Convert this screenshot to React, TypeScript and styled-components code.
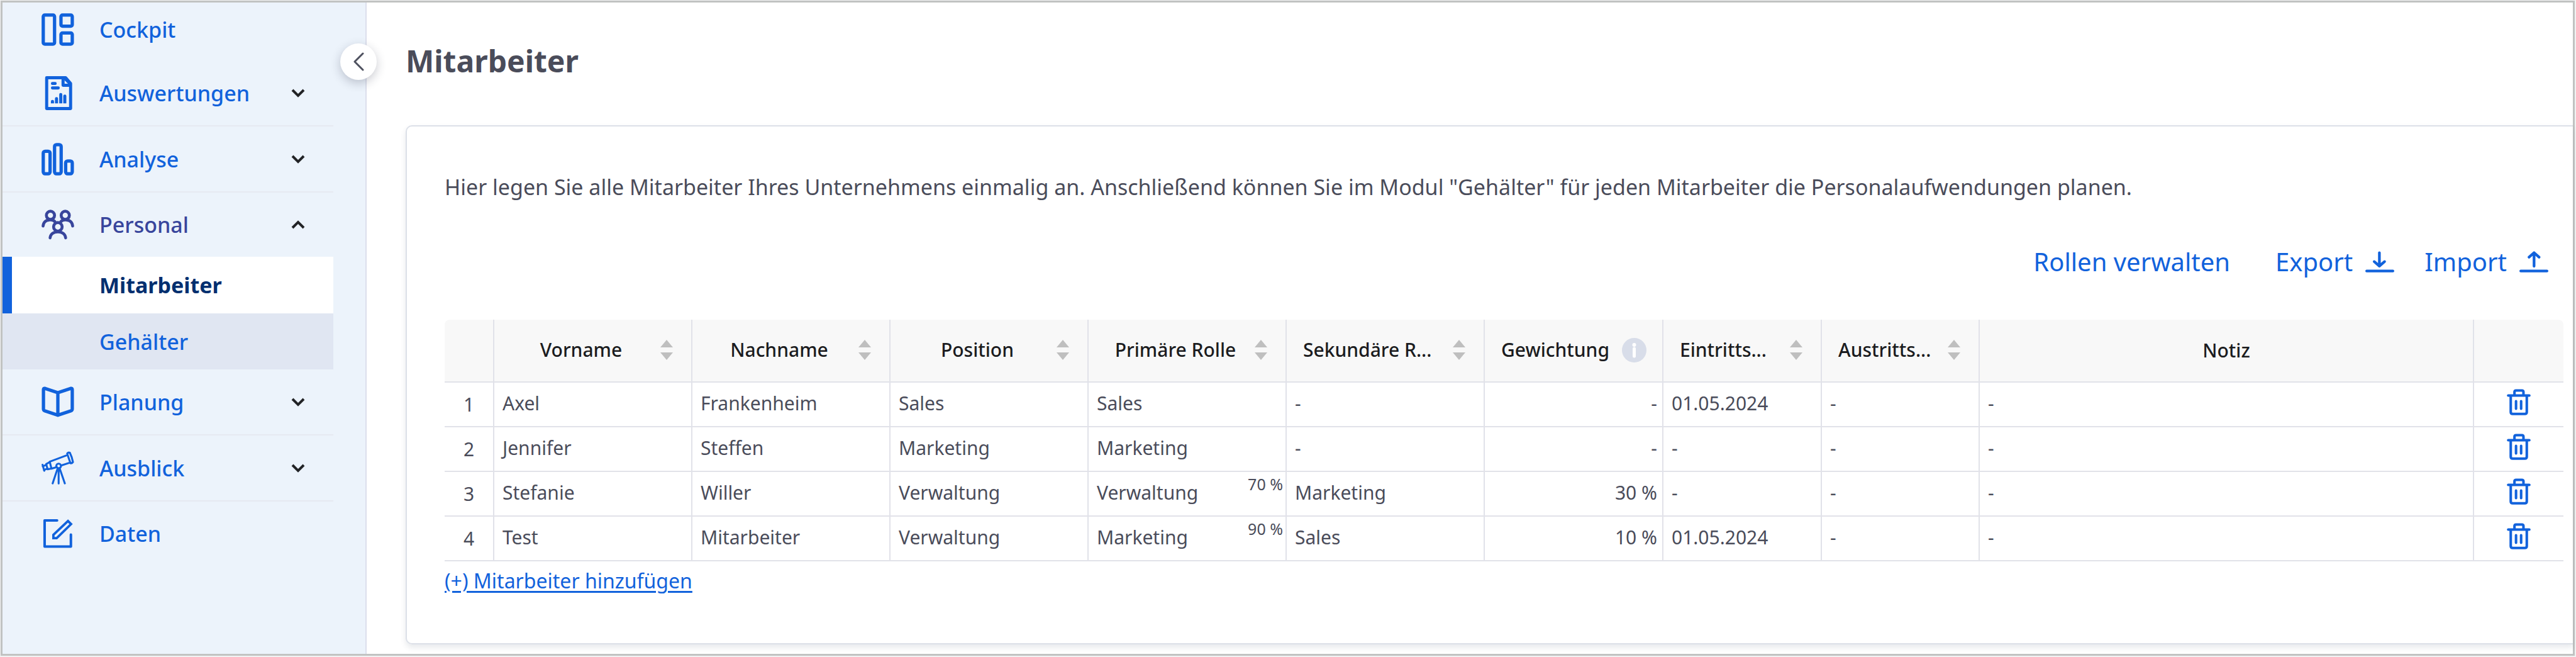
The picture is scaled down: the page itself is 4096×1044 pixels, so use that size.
import React from 'react';
import styled, { createGlobalStyle, css } from 'styled-components';

const color = {
  frame: '#c1c3c2',
  side: '#ecf3fb',
  sideLine: '#e6e9f1',
  sideEdge: '#dcdfec',
  blue: '#1162dc',
  navy: '#012f6f',
  indigo: '#38459c',
  text: '#4a4c5a',
  heading: '#1b1c20',
  line: '#e1e2e9',
  cardLine: '#dce0e8',
};

const GlobalStyle = createGlobalStyle`
  *, *::before, *::after { box-sizing: border-box; }
  body {
    margin: 0;
    padding: 1px 2px 2px 1px;
    background: #f1f2f2;
    color: ${color.text};
    font-family: "Noto Sans", "Open Sans", sans-serif;
  }
  svg { display: block; flex: none; }
  button { border: 0; padding: 0; background: none; font: inherit; color: inherit; cursor: pointer; }
`;

const Frame = styled.div`
  display: flex;
  min-height: calc(100vh - 3px);
  border: 3px solid ${color.frame};
  background: #fff;
`;

/* ---------- Sidebar ---------- */

const Sidebar = styled.aside`
  position: relative;
  flex: 0 0 579px;
  background: ${color.side};
  border-right: 2px solid ${color.sideEdge};
`;

const NavList = styled.ul`
  width: 526px;
  margin: 0;
  padding: 0;
  list-style: none;
`;

const NavItem = styled.li<{ $plain?: boolean }>`
  border-bottom: 2px solid ${(p) => (p.$plain ? 'transparent' : color.sideLine)};
  &:first-child { margin-bottom: 4px; }
`;

const navRow = css`
  display: flex;
  align-items: center;
  width: 100%;
  padding: 0 44px 0 62px;
  font-size: 34px;
  font-weight: 500;
  line-height: 46px;
  text-align: left;
  text-decoration: none;
`;

const NavLink = styled.a<{ $short?: boolean }>`
  ${navRow}
  height: ${(p) => (p.$short ? 86 : 102)}px;
  color: ${color.blue};
`;

const NavToggle = styled.button<{ $open?: boolean }>`
  ${navRow}
  height: ${(p) => (p.$open ? 102 : 103)}px;
  color: ${(p) => (p.$open ? color.indigo : color.blue)};
`;

const IconSlot = styled.span`
  display: flex;
  justify-content: center;
  width: 52px;
  margin-right: 40px;
`;

const NavLabel = styled.span`
  flex: 1;
`;

const SubList = styled.ul`
  margin: 0;
  padding: 0;
  list-style: none;
`;

const SubLink = styled.a<{ $active?: boolean }>`
  display: flex;
  align-items: center;
  height: ${(p) => (p.$active ? 90 : 89)}px;
  padding-left: 139px;
  border-left: 15px solid ${(p) => (p.$active ? color.blue : 'transparent')};
  background: ${(p) => (p.$active ? '#fff' : '#e0e6f2')};
  color: ${(p) => (p.$active ? color.navy : color.blue)};
  font-size: 34px;
  font-weight: ${(p) => (p.$active ? 700 : 500)};
  line-height: 46px;
  text-decoration: none;
`;

const CollapseButton = styled.button`
  position: absolute;
  top: 65px;
  right: -18px;
  display: flex;
  align-items: center;
  justify-content: center;
  width: 58px;
  height: 58px;
  border-radius: 50%;
  background: #fff;
  box-shadow: 0 5px 16px rgba(30, 35, 60, 0.24);
`;

/* ---------- Content ---------- */

const Main = styled.main`
  flex: 1;
  min-width: 0;
  padding-left: 62px;
`;

const Title = styled.h1`
  margin: 0;
  padding: 64px 0 73px;
  font-size: 48px;
  line-height: 58px;
  font-weight: 700;
`;

const Card = styled.section`
  padding: 73px 15px 77px 60px;
  border: 2px solid ${color.cardLine};
  border-right: 0;
  border-radius: 10px 0 0 10px;
  box-shadow: 0 5px 10px rgba(60, 75, 100, 0.12);
`;

const Intro = styled.p`
  margin: 0;
  font-size: 34px;
  line-height: 46px;
`;

const Actions = styled.div`
  display: flex;
  justify-content: flex-end;
  align-items: center;
  margin: 69px 0 65px;
  padding-right: 24px;
`;

const ActionButton = styled.button`
  display: flex;
  align-items: center;
  gap: 20px;
  margin-left: 48px;
  color: ${color.blue};
  font-size: 40px;
  line-height: 54px;
  &:first-child { margin-right: 24px; }
`;

const Table = styled.table`
  width: 100%;
  table-layout: fixed;
  border-collapse: separate;
  border-spacing: 0;
  font-size: 30px;
  line-height: 40px;
`;

const Col = styled.col<{ $w?: number }>`
  width: ${(p) => (p.$w ? `${p.$w}px` : 'auto')};
`;

const HeadCell = styled.th`
  height: 100px;
  padding: 0;
  background: #f8f8f8;
  border-right: 2px solid ${color.line};
  border-bottom: 2px solid ${color.line};
  color: ${color.heading};
  font-weight: 500;
  white-space: nowrap;
  &:first-child { border-top-left-radius: 8px; }
  &:last-child { border-right: 0; border-top-right-radius: 8px; }
`;

const HeadInner = styled.div`
  display: flex;
  align-items: center;
  justify-content: space-between;
  gap: 14px;
  padding: 0 25px 2px 26px;
`;

const SortButton = styled.button`
  display: flex;
  align-items: center;
  gap: 14px;
  width: 100%;
  padding: 0 29px 2px 26px;
`;

const HeadLabel = styled.span<{ $cut?: boolean }>`
  flex: 1;
  min-width: 0;
  text-align: ${(p) => (p.$cut ? 'left' : 'center')};
`;

const Cell = styled.td<{ $align?: 'center' | 'right' }>`
  position: relative;
  height: 71px;
  padding: 0 8px 3px 13px;
  border-right: 2px solid ${color.line};
  border-bottom: 2px solid ${color.line};
  text-align: ${(p) => p.$align ?? 'left'};
  &:first-child { padding: 0; }
  &:last-child { border-right: 0; padding: 0 0 8px; }
`;

const Share = styled.span`
  position: absolute;
  top: 4px;
  right: 4px;
  font-size: 25px;
  line-height: 30px;
`;

const TrashButton = styled.button`
  display: block;
  margin: 0 auto;
  color: ${color.blue};
`;

const AddLink = styled.a`
  display: inline-block;
  margin-top: 9px;
  color: ${color.blue};
  font-size: 32px;
  line-height: 44px;
  text-decoration: underline;
  text-decoration-thickness: 3px;
  text-underline-offset: 4px;
  vertical-align: top;
`;

/* ---------- Icons ---------- */

const Glyph = styled.svg.attrs<{ $stroke?: number }>((p) => ({
  fill: 'none',
  stroke: 'currentColor',
  strokeWidth: p.$stroke ?? 17,
  strokeLinecap: 'round',
  strokeLinejoin: 'round',
  'aria-hidden': true,
}))<{ $stroke?: number }>``;

const CockpitIcon = () => (
  <Glyph width="52" height="52" viewBox="0 0 168 168">
    <rect x="9" y="9" width="58" height="150" rx="8" />
    <rect x="100" y="9" width="58" height="58" rx="8" />
    <rect x="100" y="101" width="58" height="58" rx="8" />
  </Glyph>
);

const ReportIcon = () => (
  <Glyph width="52" height="54" viewBox="0 0 168 176" $stroke={16}>
    <path d="M26 8H124L150 38V168H26Z" />
    <path d="M111 10V47H148" />
    <path d="M113 10L148 45" strokeWidth="8" />
    <path d="M56 38H70M56 61H86" />
    <path
      d="M48 141V131a8 8 0 0 1 16 0V141ZM69 141V116a8 8 0 0 1 16 0V141ZM91 141V95a8 8 0 0 1 16 0V141ZM112 141V103a8 8 0 0 1 16 0V141Z"
      fill="currentColor"
      stroke="none"
    />
  </Glyph>
);

const BarsIcon = () => (
  <Glyph width="52" height="52" viewBox="0 0 168 168">
    <rect x="9" y="43" width="35" height="116" rx="10" />
    <rect x="67" y="9" width="34" height="150" rx="10" />
    <rect x="124" y="93" width="34" height="66" rx="10" />
  </Glyph>
);

const PeopleIcon = () => (
  <Glyph width="52" height="48" viewBox="0 0 168 154" $stroke={15}>
    <circle cx="46" cy="29" r="21" />
    <circle cx="122" cy="29" r="21" />
    <circle cx="84" cy="88" r="22" />
    <path d="M8 84C10 64 24 53 40 53C56 51 66 56 72 66" />
    <path d="M160 84C158 64 144 53 128 53C112 51 102 56 96 66" />
    <path d="M44 145C46 126 60 114 84 114C108 114 122 126 124 145" />
  </Glyph>
);

const BookIcon = () => (
  <Glyph width="52" height="49" viewBox="0 0 168 158">
    <path d="M84 32L18 10Q10 8 10 16V115Q10 122 16 125L84 148L152 125Q158 122 158 115V16Q158 8 150 10ZM84 32V148" />
  </Glyph>
);

const TelescopeIcon = () => (
  <Glyph width="52" height="53" viewBox="0 0 168 172" $stroke={10}>
    <path d="M132 12Q138 4 146 8Q158 32 162 56Q156 64 149 62ZM133 20L42 54L51 90L78 82M149 58L103 73" />
    <path d="M42 56L24 66L31 93L51 89M24 70L6 78M31 89L12 97M5 70L14 101" />
    <circle cx="88" cy="76" r="12" />
    <path d="M88 90V166M83 88L57 166M93 88L120 166" />
  </Glyph>
);

const EditIcon = () => (
  <Glyph width="52" height="48" viewBox="0 0 168 154" $stroke={13}>
    <path d="M80 9H16V143H151V82" />
    <path d="M136 12L152 28L78 100H61V83Z" strokeWidth="12" strokeLinejoin="miter" />
  </Glyph>
);

const Chevron = ({ up }: { up?: boolean }) => (
  <Glyph width="24" height="16" viewBox="0 0 24 16" $stroke={4} color="#222326">
    <path d={up ? 'M3 13L12 4L21 13' : 'M3 3L12 12L21 3'} strokeLinecap="butt" strokeLinejoin="miter" />
  </Glyph>
);

const BackIcon = () => (
  <Glyph width="18" height="30" viewBox="0 0 18 30" $stroke={3} color="#4e515f">
    <path d="M16 2L3 15L16 28" />
  </Glyph>
);

const DownloadIcon = () => (
  <Glyph width="46" height="34" viewBox="0 0 150 110" $stroke={14}>
    <path d="M7 103H143" />
    <path d="M73 8V76M46 54L73 77L100 54" />
  </Glyph>
);

const UploadIcon = () => (
  <Glyph width="46" height="34" viewBox="0 0 150 110" $stroke={14}>
    <path d="M7 103H143" />
    <path d="M76 78V10M50 31L76 8L102 31" />
  </Glyph>
);

const TrashIcon = () => (
  <Glyph width="38" height="42" viewBox="0 0 122 135" $stroke={13}>
    <path d="M7 34H115M39 32V16Q39 8 47 8H77Q85 8 85 16V32" />
    <path d="M20 36V118Q20 128 30 128H92Q102 128 102 118V36" />
    <path d="M47 63V101M73 63V101" />
  </Glyph>
);

const SortIcon = () => (
  <svg width="20" height="32" viewBox="0 0 20 32" fill="#bfbfbf" aria-hidden="true">
    <path d="M10 0L20 12H0ZM10 32L0 20H20Z" />
  </svg>
);

const InfoIcon = () => (
  <svg width="39" height="39" viewBox="0 0 39 39" aria-hidden="true">
    <circle cx="19.5" cy="19.5" r="19.5" fill="#d8dde9" />
    <circle cx="19.5" cy="11" r="3" fill="#fff" />
    <path d="M19.5 17V29" stroke="#fff" strokeWidth="5" strokeLinecap="round" />
  </svg>
);

/* ---------- Data ---------- */

type Employee = {
  first: string;
  last: string;
  position: string;
  primary: string;
  share?: string;
  secondary: string;
  weight: string;
  entry: string;
};

const employees: Employee[] = [
  { first: 'Axel', last: 'Frankenheim', position: 'Sales', primary: 'Sales', secondary: '-', weight: '-', entry: '01.05.2024' },
  { first: 'Jennifer', last: 'Steffen', position: 'Marketing', primary: 'Marketing', secondary: '-', weight: '-', entry: '-' },
  { first: 'Stefanie', last: 'Willer', position: 'Verwaltung', primary: 'Verwaltung', share: '70 %', secondary: 'Marketing', weight: '30 %', entry: '-' },
  { first: 'Test', last: 'Mitarbeiter', position: 'Verwaltung', primary: 'Marketing', share: '90 %', secondary: 'Sales', weight: '10 %', entry: '01.05.2024' },
];

const columnWidths: (number | undefined)[] = [79, 315, 315, 315, 315, 315, 284, 252, 251, undefined, 142];

const SortHead = ({ label, cut }: { label: string; cut?: boolean }) => (
  <HeadCell scope="col">
    <SortButton type="button">
      <HeadLabel $cut={cut}>{label}</HeadLabel>
      <SortIcon />
    </SortButton>
  </HeadCell>
);

const NavGroup = ({ icon, label }: { icon: React.ReactNode; label: string }) => (
  <NavItem>
    <NavToggle type="button" aria-expanded={false}>
      <IconSlot>{icon}</IconSlot>
      <NavLabel>{label}</NavLabel>
      <Chevron />
    </NavToggle>
  </NavItem>
);

export default function App() {
  return (
    <>
      <GlobalStyle />
      <Frame>
        <Sidebar>
          <nav>
            <NavList>
              <NavItem $plain>
                <NavLink href="#cockpit" $short>
                  <IconSlot><CockpitIcon /></IconSlot>
                  <NavLabel>Cockpit</NavLabel>
                </NavLink>
              </NavItem>
              <NavGroup icon={<ReportIcon />} label="Auswertungen" />
              <NavGroup icon={<BarsIcon />} label="Analyse" />
              <li>
                <NavToggle type="button" aria-expanded $open>
                  <IconSlot><PeopleIcon /></IconSlot>
                  <NavLabel>Personal</NavLabel>
                  <Chevron up />
                </NavToggle>
                <SubList>
                  <li><SubLink href="#mitarbeiter" $active aria-current="page">Mitarbeiter</SubLink></li>
                  <li><SubLink href="#gehaelter">Gehälter</SubLink></li>
                </SubList>
              </li>
              <NavGroup icon={<BookIcon />} label="Planung" />
              <NavGroup icon={<TelescopeIcon />} label="Ausblick" />
              <NavItem $plain>
                <NavLink href="#daten">
                  <IconSlot><EditIcon /></IconSlot>
                  <NavLabel>Daten</NavLabel>
                </NavLink>
              </NavItem>
            </NavList>
          </nav>
          <CollapseButton type="button" aria-label="Menü einklappen">
            <BackIcon />
          </CollapseButton>
        </Sidebar>

        <Main>
          <Title>Mitarbeiter</Title>
          <Card>
            <Intro>
              Hier legen Sie alle Mitarbeiter Ihres Unternehmens einmalig an. Anschließend können Sie im Modul
              "Gehälter" für jeden Mitarbeiter die Personalaufwendungen planen.
            </Intro>
            <Actions>
              <ActionButton type="button">Rollen verwalten</ActionButton>
              <ActionButton type="button">Export <DownloadIcon /></ActionButton>
              <ActionButton type="button">Import <UploadIcon /></ActionButton>
            </Actions>
            <Table>
              <colgroup>
                {columnWidths.map((w, i) => <Col key={i} $w={w} />)}
              </colgroup>
              <thead>
                <tr>
                  <HeadCell />
                  <SortHead label="Vorname" />
                  <SortHead label="Nachname" />
                  <SortHead label="Position" />
                  <SortHead label="Primäre Rolle" />
                  <SortHead label="Sekundäre R..." cut />
                  <HeadCell scope="col">
                    <HeadInner>Gewichtung <InfoIcon /></HeadInner>
                  </HeadCell>
                  <SortHead label="Eintritts..." cut />
                  <SortHead label="Austritts..." cut />
                  <HeadCell scope="col">Notiz</HeadCell>
                  <HeadCell />
                </tr>
              </thead>
              <tbody>
                {employees.map((e, i) => (
                  <tr key={e.first}>
                    <Cell $align="center">{i + 1}</Cell>
                    <Cell>{e.first}</Cell>
                    <Cell>{e.last}</Cell>
                    <Cell>{e.position}</Cell>
                    <Cell>{e.primary}{e.share && <Share>{e.share}</Share>}</Cell>
                    <Cell>{e.secondary}</Cell>
                    <Cell $align="right">{e.weight}</Cell>
                    <Cell>{e.entry}</Cell>
                    <Cell>-</Cell>
                    <Cell>-</Cell>
                    <Cell>
                      <TrashButton type="button" aria-label={`${e.first} löschen`}>
                        <TrashIcon />
                      </TrashButton>
                    </Cell>
                  </tr>
                ))}
              </tbody>
            </Table>
            <AddLink href="#neu">(+) Mitarbeiter hinzufügen</AddLink>
          </Card>
        </Main>
      </Frame>
    </>
  );
}
